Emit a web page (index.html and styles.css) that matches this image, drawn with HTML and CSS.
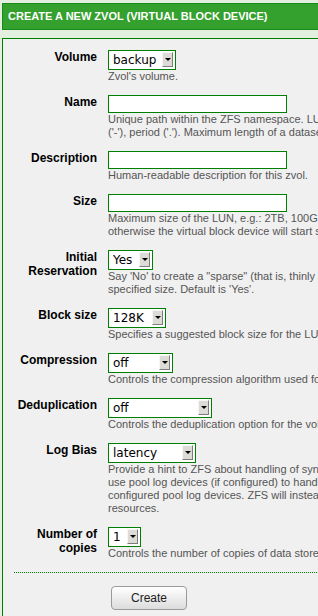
FILE: index.html
```html
<!DOCTYPE html>
<html>
<head>
<meta charset="utf-8">
<link rel="stylesheet" href="styles.css">
</head>
<body>
<div class="page">
  <div class="title">CREATE A NEW ZVOL (VIRTUAL BLOCK DEVICE)</div>
  <div class="box">
    <div class="form">
      <div class="label">Volume</div>
      <div class="field">
        <div class="select w-volume"><span class="val">backup</span><span class="btn"><span class="arrow"></span></span></div>
        <div class="hint">Zvol's volume.</div>
      </div>

      <div class="label">Name</div>
      <div class="field">
        <input class="input" type="text">
        <div class="hint">Unique path within the ZFS namespace. LUN name may contain letters, numbers, underscore ('_'), hyphen<br>('-'), period ('.'). Maximum length of a dataset name is 256 characters.</div>
      </div>

      <div class="label">Description</div>
      <div class="field">
        <input class="input" type="text">
        <div class="hint">Human-readable description for this zvol.</div>
      </div>

      <div class="label">Size</div>
      <div class="field">
        <input class="input" type="text">
        <div class="hint">Maximum size of the LUN, e.g.: 2TB, 100GB. Make sure the pool has enough free space,<br>otherwise the virtual block device will start showing errors once the pool is full.</div>
      </div>

      <div class="label">Initial<br>Reservation</div>
      <div class="field">
        <div class="select w-yes"><span class="val">Yes</span><span class="btn"><span class="arrow"></span></span></div>
        <div class="hint">Say 'No' to create a "sparse" (that is, thinly provisioned) volume; otherwise space is reserved for the<br>specified size. Default is 'Yes'.</div>
      </div>

      <div class="label">Block size</div>
      <div class="field">
        <div class="select w-bs"><span class="val">128K</span><span class="btn"><span class="arrow"></span></span></div>
        <div class="hint">Specifies a suggested block size for the LUN.</div>
      </div>

      <div class="label">Compression</div>
      <div class="field">
        <div class="select w-comp"><span class="val">off</span><span class="btn"><span class="arrow"></span></span></div>
        <div class="hint">Controls the compression algorithm used for this volume.</div>
      </div>

      <div class="label">Deduplication</div>
      <div class="field">
        <div class="select w-dedup"><span class="val">off</span><span class="btn"><span class="arrow"></span></span></div>
        <div class="hint">Controls the deduplication option for the volume.</div>
      </div>

      <div class="label">Log Bias</div>
      <div class="field">
        <div class="select w-log"><span class="val">latency</span><span class="btn"><span class="arrow"></span></span></div>
        <div class="hint">Provide a hint to ZFS about handling of synchronous requests in this dataset. If 'latency' (default), ZFS will<br>use pool log devices (if configured) to handle the requests at low latency. If 'throughput', ZFS will not use<br>configured pool log devices. ZFS will instead optimize synchronous operations for global pool throughput and efficient use of<br>resources.</div>
      </div>

      <div class="label">Number of<br>copies</div>
      <div class="field">
        <div class="select w-copies"><span class="val">1</span><span class="btn"><span class="arrow"></span></span></div>
        <div class="hint">Controls the number of copies of data stored for this dataset.</div>
      </div>
    </div>
    <div class="sep"></div>
    <div class="actions"><button class="create" type="button">Create</button></div>
  </div>
</div>
</body>
</html>
```
FILE: styles.css
```css
html, body {
  margin: 0;
  padding: 0;
  overflow: hidden;
  background: #e3f0e0;
}

.page {
  width: 760px;
  padding: 3px 0 0 2px;
}

.title {
  background: #34a02d;
  border: 1px solid #178a17;
  color: #fff;
  font: bold 11px/25px "Liberation Sans", Arial, sans-serif;
  padding: 0 5px;
}

.box {
  margin-top: 8px;
  border: 1px solid #008000;
  background: #f0f0f0;
  padding: 11px 0 20px 0;
}

.form {
  display: grid;
  grid-template-columns: 94px 1fr;
  column-gap: 11px;
  row-gap: 12px;
}

.label {
  font: bold 12px/14px "Liberation Sans", Arial, sans-serif;
  color: #000;
  text-align: right;
}

.field {
  min-width: 0;
}

.hint {
  font: 11px/13px "Liberation Sans", Arial, sans-serif;
  color: #555;
  white-space: nowrap;
}

.input {
  display: block;
  box-sizing: border-box;
  width: 179px;
  height: 18px;
  margin: 0;
  padding: 0;
  border: 1px solid #008000;
  background: #fff;
  outline: none;
}

.select {
  display: flex;
  box-sizing: border-box;
  height: 20px;
  border: 1px solid #008000;
  background: #fff;
  font: 12px/18px "DejaVu Sans", sans-serif;
  color: #000;
}

.select .val {
  flex: 1;
  padding-left: 4px;
  white-space: nowrap;
}

.select .btn {
  display: flex;
  align-items: center;
  justify-content: center;
  box-sizing: border-box;
  width: 11px;
  height: 15px;
  margin: 1px 2px 0 0;
  background: #dddbd6;
  border-top: 1px solid #f6f6f6;
  border-left: 1px solid #f6f6f6;
  border-right: 1px solid #7d7d7d;
  border-bottom: 1px solid #7d7d7d;
}

.select .arrow {
  width: 0;
  height: 0;
  border-left: 3px solid transparent;
  border-right: 3px solid transparent;
  border-top: 3px solid #000;
}

.w-volume { width: 68px; }
.w-yes { width: 45px; }
.w-bs { width: 58px; }
.w-comp { width: 65px; }
.w-dedup { width: 104px; }
.w-log { width: 88px; }
.w-copies { width: 33px; }

.sep {
  margin: 12px 0 0 11px;
  border-top: 1px dotted #008000;
}

.actions {
  padding: 13px 0 0 108px;
}

.create {
  box-sizing: border-box;
  width: 76px;
  height: 24px;
  margin: 0;
  padding: 0;
  border: 1px solid #9a9a9a;
  border-radius: 4px;
  background: linear-gradient(#ffffff, #dcdcdc);
  font: 12px "Liberation Sans", Arial, sans-serif;
  color: #222;
}
```
